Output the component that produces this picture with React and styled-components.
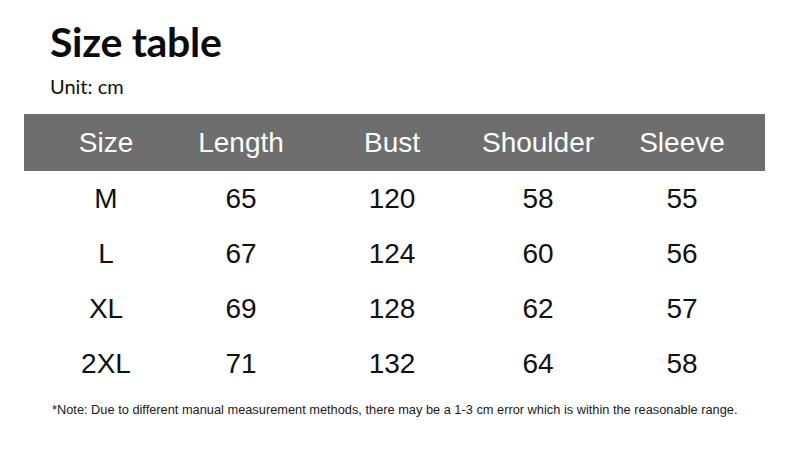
import React from 'react';
import styled, { createGlobalStyle } from 'styled-components';

const GlobalStyle = createGlobalStyle`
  html, body {
    margin: 0;
    padding: 0;
    background: #ffffff;
  }
  body {
    width: 790px;
    height: 449px;
    overflow: hidden;
  }
`;

const Page = styled.div`
  width: 790px;
  height: 449px;
  box-sizing: border-box;
  padding: 18px 25px 0 24px;
  background: #fff;
  color: #111;
`;

const Title = styled.h1`
  margin: 0 0 0 26px;
  font-family: Lato, "Open Sans", sans-serif;
  font-weight: 700;
  font-size: 41px;
  line-height: 48px;
  letter-spacing: -0.3px;
  color: #0c0c0c;
`;

const Unit = styled.div`
  margin: 8px 0 0 26px;
  font-family: Lato, "Open Sans", sans-serif;
  font-size: 20px;
  line-height: 24px;
  color: #111;
`;

const Table = styled.div`
  margin-top: 16px;
  width: 741px;
`;

const Row = styled.div`
  display: grid;
  grid-template-columns: 164px 106px 196px 96px 179px;
  height: ${p => (p.$head ? '57px' : '55px')};
  align-items: center;
  background: ${p => (p.$head ? '#6e6e6e' : 'transparent')};
  color: ${p => (p.$head ? '#ffffff' : '#111111')};
  font-family: "Liberation Sans", Arial, sans-serif;
  font-size: 28px;
`;

const Cell = styled.div`
  display: flex;
  justify-content: center;
  white-space: nowrap;
  padding-left: ${p => p.$shift || 0}px;
`;

const Note = styled.p`
  margin: 11px 0 0 28px;
  font-family: "Liberation Sans", Arial, sans-serif;
  font-size: 12.8px;
  color: #1a1a1a;
`;

const headers = ['Size', 'Length', 'Bust', 'Shoulder', 'Sleeve'];
const rows = [
  ['M', 65, 120, 58, 55],
  ['L', 67, 124, 60, 56],
  ['XL', 69, 128, 62, 57],
  ['2XL', 71, 132, 64, 58],
];

const App = () => (
  <Page>
    <GlobalStyle />
    <Title>Size table</Title>
    <Unit>Unit: cm</Unit>
    <Table>
      <Row $head>
        {headers.map((h, i) => (
          <Cell key={h} $shift={i === 4 ? 13 : 0}>{h}</Cell>
        ))}
      </Row>
      {rows.map(r => (
        <Row key={r[0]}>
          {r.map((v, i) => (
            <Cell key={i} $shift={i === 4 ? 13 : 0}>{v}</Cell>
          ))}
        </Row>
      ))}
    </Table>
    <Note>
      *Note: Due to different manual measurement methods, there may be a 1-3 cm error which is within the reasonable range.
    </Note>
  </Page>
);

export default App;
